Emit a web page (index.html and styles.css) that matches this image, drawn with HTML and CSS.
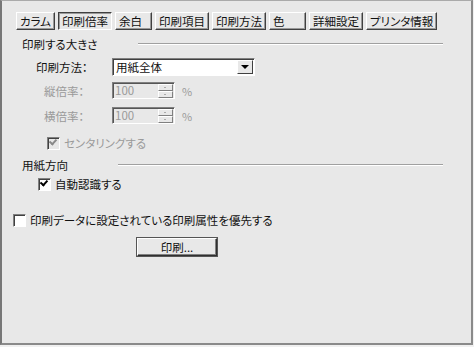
FILE: index.html
```html
<!DOCTYPE html>
<html lang="ja">

<head>
    <meta charset="UTF-8">
    <title>印刷倍率</title>
    <link rel="stylesheet" href="styles.css">
</head>

<body>
    <div class="dialog">
        <!-- Tabs -->
        <div class="tabs">
            <button class="tab">カラム</button>
            <button class="tab active">印刷倍率</button>
            <button class="tab">余白</button>
            <button class="tab">印刷項目</button>
            <button class="tab">印刷方法</button>
            <button class="tab">色</button>
            <button class="tab">詳細設定</button>
            <button class="tab">プリンタ情報</button>
        </div>

        <!-- Print size -->
        <div class="group-title size-title">
            <span>印刷する大きさ</span>
            <span class="rule"></span>
        </div>

        <div class="row method-row">
            <span class="label">印刷方法：</span>
            <div class="select">
                <span class="select-value">用紙全体</span>
                <span class="select-btn"><span class="arrow"></span></span>
            </div>
        </div>

        <div class="row spin-row">
            <span class="label disabled">縦倍率：</span>
            <div class="spin">
                <span class="spin-value">100</span>
                <span class="spin-btns"><span></span><span></span></span>
            </div>
            <span class="unit">%</span>
        </div>

        <div class="row spin-row">
            <span class="label disabled">横倍率：</span>
            <div class="spin">
                <span class="spin-value">100</span>
                <span class="spin-btns"><span></span><span></span></span>
            </div>
            <span class="unit">%</span>
        </div>

        <div class="check center-check disabled">
            <span class="box checked"></span>
            <span>センタリングする</span>
        </div>

        <!-- Paper orientation -->
        <div class="group-title orient-title">
            <span>用紙方向</span>
            <span class="rule"></span>
        </div>

        <div class="check auto-check">
            <span class="box checked"></span>
            <span>自動認識する</span>
        </div>

        <div class="check priority-check">
            <span class="box"></span>
            <span>印刷データに設定されている印刷属性を優先する</span>
        </div>

        <div class="actions">
            <button class="print-btn">印刷...</button>
        </div>
    </div>
</body>

</html>
```

FILE: styles.css
```css
body {
    margin: 0;
    background-color: #f0f0f0;
    font-family: "Noto Sans CJK JP", "Noto Sans", sans-serif;
    font-size: 11.5px;
    font-feature-settings: "palt";
    color: #111;
}

.dialog {
    box-sizing: border-box;
    width: 473px;
    height: 345px;
    background-color: #e8e8e8;
    border: 2px solid #777;
    border-top: 1px solid #aaa;
    border-right-color: #8a8a8a;
    border-bottom-color: #8a8a8a;
    display: flex;
    flex-direction: column;
}

/* Tabs */
.tabs {
    display: flex;
    gap: 3px;
    margin: 11px 0 0 14px;
}

.tab {
    font: inherit;
    color: #111;
    height: 18px;
    min-width: 37px;
    margin: 0;
    padding: 0 3px;
    text-align: left;
    line-height: 14px;
    background-color: #e8e8e8;
    border: 1px solid;
    border-color: #fff #404040 #404040 #fff;
    box-shadow: inset -1px -1px 0 #999;
}

.tab.active {
    border-color: #404040 #fff #fff #404040;
    box-shadow: inset 1px 1px 0 #999;
}

/* Group titles */
.group-title {
    display: flex;
    align-items: center;
    margin-left: 20px;
    margin-right: 28px;
    height: 14px;
}

.group-title .rule {
    flex: 1;
    height: 0;
    border-top: 1px solid #a0a0a0;
    border-bottom: 1px solid #fff;
}

.size-title {
    margin-top: 7px;
}

.size-title .rule {
    margin-left: 40px;
}

.orient-title {
    margin-top: 7px;
}

.orient-title .rule {
    margin-left: 50px;
}

/* Rows */
.row {
    display: flex;
    align-items: center;
}

.method-row {
    margin: 7px 0 0 34px;
}

.method-row .label {
    width: 76px;
}

.spin-row {
    margin: 6px 0 0 42px;
}

.spin-row + .spin-row {
    margin-top: 8px;
}

.spin-row .label {
    width: 68px;
}

.disabled,
.disabled span {
    color: #9a9a9a;
}

.select {
    box-sizing: border-box;
    display: flex;
    width: 143px;
    height: 18px;
    background-color: #fff;
    border: 1px solid;
    border-color: #808080 #fff #fff #808080;
    box-shadow: inset 1px 1px 0 #404040;
}

.select-value {
    flex: 1;
    padding-left: 3px;
    line-height: 16px;
}

.select-btn {
    box-sizing: border-box;
    width: 16px;
    height: 14px;
    margin: 1px 1px 0 0;
    background-color: #e8e8e8;
    border: 1px solid;
    border-color: #fff #404040 #404040 #fff;
    display: flex;
    align-items: center;
    justify-content: center;
}

.arrow {
    width: 0;
    height: 0;
    border-left: 4px solid transparent;
    border-right: 4px solid transparent;
    border-top: 4px solid #000;
}

.spin {
    box-sizing: border-box;
    display: flex;
    width: 63px;
    height: 17px;
    border: 1px solid;
    border-color: #808080 #fff #fff #808080;
    box-shadow: inset 1px 1px 0 #555;
}

.spin-value {
    flex: 1;
    padding-left: 2px;
    line-height: 15px;
    color: #9a9a9a;
}

.spin-btns {
    display: flex;
    flex-direction: column;
    width: 15px;
    margin: 1px 1px 0 0;
}

.spin-btns span {
    flex: 1;
    border: 1px solid;
    border-color: #fff #808080 #808080 #fff;
    position: relative;
}

.spin-btns span::after {
    content: "";
    position: absolute;
    left: 5px;
    top: 2px;
    width: 2px;
    height: 1px;
    background-color: #aaa;
}

.unit {
    margin-left: 7px;
    color: #9a9a9a;
    font-size: 11px;
}

/* Checkboxes */
.check {
    display: flex;
    align-items: center;
    gap: 4px;
}

.box {
    box-sizing: border-box;
    width: 13px;
    height: 13px;
    background-color: #fff;
    border: 1px solid;
    border-color: #808080 #fff #fff #808080;
    box-shadow: inset 1px 1px 0 #404040;
    position: relative;
}

.box.checked::after {
    content: "";
    position: absolute;
    left: 2px;
    top: 1px;
    width: 5px;
    height: 3px;
    border-left: 2px solid #000;
    border-bottom: 2px solid #000;
    transform: rotate(-48deg);
    transform-origin: 3px 3px;
}

.disabled .box {
    background-color: #e8e8e8;
}

.disabled .box.checked::after {
    border-color: #8a8a8a;
}

.center-check {
    margin: 11px 0 0 45px;
}

.auto-check {
    margin: 4px 0 0 36px;
}

.priority-check {
    margin: 20px 0 0 11px;
}

/* Print button */
.actions {
    margin: 10px 0 0 135px;
}

.print-btn {
    font: inherit;
    color: #111;
    width: 80px;
    height: 18px;
    margin: 0;
    line-height: 13px;
    background-color: #e8e8e8;
    border: 1px solid;
    border-color: #fff #303030 #303030 #fff;
    box-shadow: inset -1px -1px 0 #808080, 0 0 0 1px #555;
}
```
